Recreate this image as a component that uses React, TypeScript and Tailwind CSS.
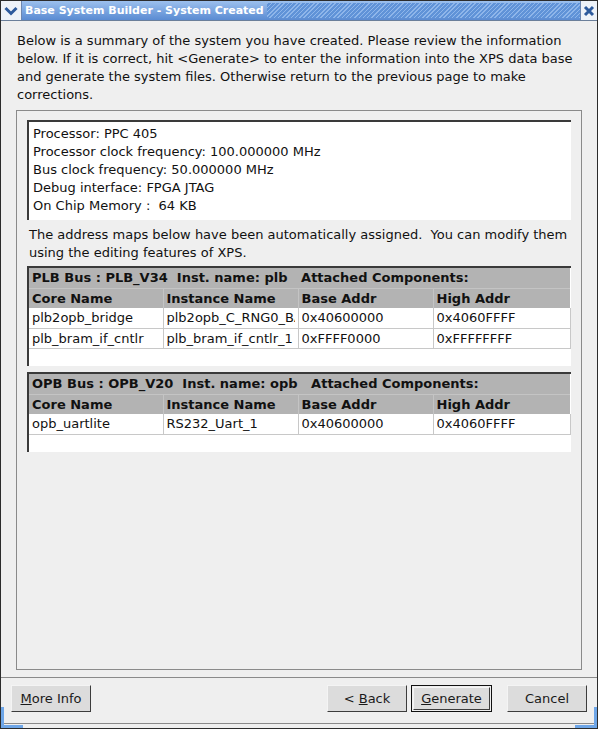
import React from 'react';

type Row = { core: string; inst: string; base: string; high: string };

const plbRows: Row[] = [
  { core: 'plb2opb_bridge', inst: 'plb2opb_C_RNG0_BASEADDR', base: '0x40600000', high: '0x4060FFFF' },
  { core: 'plb_bram_if_cntlr', inst: 'plb_bram_if_cntlr_1', base: '0xFFFF0000', high: '0xFFFFFFFF' },
];

const opbRows: Row[] = [
  { core: 'opb_uartlite', inst: 'RS232_Uart_1', base: '0x40600000', high: '0x4060FFFF' },
];

const BusTable = ({ title, rows, height }: { title: string; rows: Row[]; height: string }) => (
  <div className={`bg-white border-t-2 border-l-2 border-[#3a3a3a] ${height}`}>
    <table className="w-[541px] table-fixed border-collapse text-[13px] leading-[15px]">
      <colgroup>
        <col className="w-[134px]" />
        <col className="w-[135px]" />
        <col className="w-[135px]" />
        <col className="w-[137px]" />
      </colgroup>
      <thead>
        <tr className="bg-[#b3b3b3] h-[20px]">
          <th colSpan={4} className="text-left font-bold px-[3px] whitespace-pre">
            {title}
          </th>
        </tr>
        <tr className="bg-[#b3b3b3] h-[20px]">
          {['Core Name', 'Instance Name', 'Base Addr', 'High Addr'].map((h, i) => (
            <th
              key={h}
              className={`text-left font-bold px-[3px] border-t border-[#c4c4c4] ${i > 0 ? 'border-l' : ''}`}
            >
              {h}
            </th>
          ))}
        </tr>
      </thead>
      <tbody>
        {rows.map((r) => (
          <tr key={r.core} className="h-[20px]">
            {[r.core, r.inst, r.base, r.high].map((c, i) => (
              <td
                key={i}
                className={`px-[3px] border-b border-[#c8c8c8] ${i > 0 ? 'border-l' : ''} ${i === 3 ? 'border-r' : ''}`}
              >
                <div className="w-full overflow-hidden whitespace-nowrap">{c}</div>
              </td>
            ))}
          </tr>
        ))}
      </tbody>
    </table>
  </div>
);

const Btn = ({ children, isDefault }: { children: React.ReactNode; isDefault?: boolean }) => (
  <div className={isDefault ? 'border border-[#111] p-[1px]' : ''}>
    <button
      className={`${isDefault ? 'w-[77px] h-[23px]' : 'w-[80px] h-[27px]'} bg-[#dcdcdc] border border-t-[#f4f4f4] border-l-[#f4f4f4] border-b-[#3c3c3c] border-r-[#3c3c3c] text-[13px] text-[#1a1a1a] flex items-center justify-center`}
    >
      {children}
    </button>
  </div>
);

export default function App() {
  return (
    <div className="w-[598px] h-[729px] bg-[#efefef] flex flex-col border border-[#2c2c2c] font-['DejaVu_Sans','Liberation_Sans',sans-serif] text-[#111] relative overflow-hidden">
      {/* Title bar */}
      <div className="h-[20px] flex bg-[linear-gradient(#9cc0ee,#5a8bd2)] border-b border-[#6b7f9a] shrink-0">
        <div className="w-[21px] bg-[#eef2f8] flex items-center justify-center border-r border-[#6c86b0]">
          <svg width="14" height="10" viewBox="0 0 14 10">
            <path d="M1.5 2 L7 7.5 L12.5 2" stroke="#2d5a9c" strokeWidth="3" fill="none" />
          </svg>
        </div>
        <div className="pl-[3px] pr-[3px] text-white font-bold text-[11px] leading-[20px] whitespace-nowrap">
          Base System Builder - System Created
        </div>
        <div className="flex-1 my-[2px] bg-[repeating-linear-gradient(135deg,#8fb6ea_0px,#8fb6ea_1px,#6093d8_1px,#6093d8_3px)]" />
        <div className="w-[17px] bg-[#eef2f8] flex items-center justify-center border-l border-[#6c86b0]">
          <svg width="12" height="12" viewBox="0 0 12 12">
            <path d="M2 2 L10 10 M10 2 L2 10" stroke="#2d5a9c" strokeWidth="3" />
          </svg>
        </div>
      </div>

      {/* Body */}
      <div className="flex-1 flex flex-col border-x-[3px] border-[#efefef]">
        <p className="px-[13px] pt-[11px] text-[13px] leading-[18px]">
          Below is a summary of the system you have created. Please review the information below. If it is correct,
          hit &lt;Generate&gt; to enter the information into the XPS data base and generate the system files.
          Otherwise return to the previous page to make corrections.
        </p>

        <div className="mt-[6px] mx-[12px] h-[560px] border border-[#8a8a8a] pt-[9px] px-[10px]">
          <div className="bg-white border-t-2 border-l-2 border-[#3a3a3a] pl-[4px] pt-[3px] pb-[5px] text-[13px] leading-[18px]">
            <div>Processor: PPC 405</div>
            <div>Processor clock frequency: 100.000000 MHz</div>
            <div>Bus clock frequency: 50.000000 MHz</div>
            <div>Debug interface: FPGA JTAG</div>
            <div className="whitespace-pre">On Chip Memory :  64 KB</div>
          </div>

          <p className="mt-[6px] pl-[2px] text-[13px] leading-[18px] whitespace-pre">
            {'The address maps below have been automatically assigned.  You can modify them\nusing the editing features of XPS.'}
          </p>

          <div className="mt-[4px]">
            <BusTable title="PLB Bus : PLB_V34  Inst. name: plb   Attached Components:" rows={plbRows} height="h-[100px]" />
          </div>
          <div className="mt-[6px]">
            <BusTable title="OPB Bus : OPB_V20  Inst. name: opb   Attached Components:" rows={opbRows} height="h-[80px]" />
          </div>
        </div>

        <div className="mt-[7px] border-t border-[#8a8a8a] -mx-[3px]" />

        <div className="flex items-center px-[7px] pt-[7px]">
          <Btn>
            <span><span className="underline">M</span>ore Info</span>
          </Btn>
          <div className="flex-1" />
          <Btn>
            <span>&lt; <span className="underline">B</span>ack</span>
          </Btn>
          <div className="w-[4px]" />
          <Btn isDefault>
            <span><span className="underline">G</span>enerate</span>
          </Btn>
          <div className="w-[15px]" />
          <Btn>
            <span>Cancel</span>
          </Btn>
        </div>

        <div className="mt-auto mb-[4px] border-t border-[#8a8a8a] -mx-[3px]" />
      </div>

      {/* resize corners */}
      <div className="absolute left-0 bottom-0 w-[22px] h-[21px] border-l-[3px] border-b-[3px] border-[#6ea6e8]" />
      <div className="absolute right-0 bottom-0 w-[22px] h-[21px] border-r-[3px] border-b-[3px] border-[#6ea6e8]" />
    </div>
  );
}
